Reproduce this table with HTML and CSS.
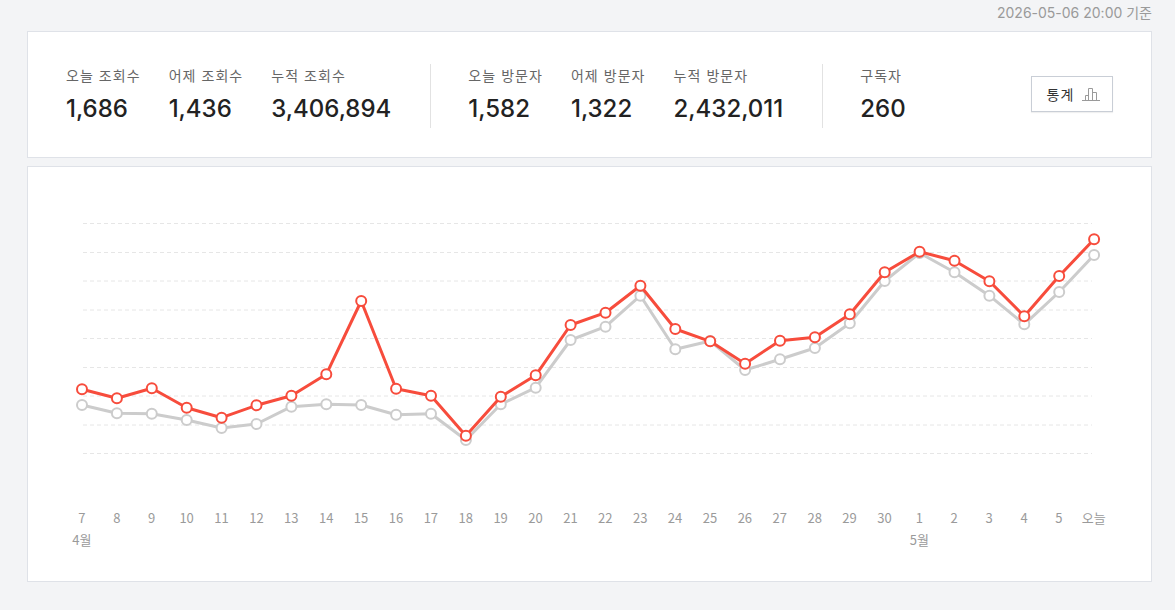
FILE: index.html
```html
<!DOCTYPE html>
<html lang="ko">
<head>
<meta charset="utf-8">
<title>통계</title>
<link rel="stylesheet" href="styles.css">
</head>
<body>
<div class="page">
  <div class="timestamp">2026-05-06 20:00 기준</div>

  <section class="card summary">
    <div class="group">
      <div class="stat"><div class="label">오늘 조회수</div><div class="value">1,686</div></div>
      <div class="stat"><div class="label">어제 조회수</div><div class="value">1,436</div></div>
      <div class="stat"><div class="label">누적 조회수</div><div class="value">3,406,894</div></div>
    </div>
    <div class="divider"></div>
    <div class="group">
      <div class="stat"><div class="label">오늘 방문자</div><div class="value">1,582</div></div>
      <div class="stat"><div class="label">어제 방문자</div><div class="value">1,322</div></div>
      <div class="stat"><div class="label">누적 방문자</div><div class="value">2,432,011</div></div>
    </div>
    <div class="divider"></div>
    <div class="group">
      <div class="stat"><div class="label">구독자</div><div class="value">260</div></div>
    </div>
    <button class="stats-btn" type="button"><span>통계</span>
      <svg class="stats-icon" width="18" height="14" viewBox="0 0 18 14" fill="none" stroke="#9a9a9a" stroke-width="1">
        <path d="M0 13.5H18"/>
        <path d="M3.5 13.5V8.5H6.5V13.5"/>
        <path d="M6.5 13.5V1.5H10.5V13.5"/>
        <path d="M10.5 13.5V5.5H14.5V13.5"/>
      </svg>
    </button>
  </section>

  <section class="card chart">
    <svg class="plot" width="1123" height="330" viewBox="0 0 1123 330">
      <g stroke="#e6e6e6" stroke-width="1" stroke-dasharray="4 3">
        <line x1="55" y1="56.5" x2="1064" y2="56.5"/>
        <line x1="55" y1="85.5" x2="1064" y2="85.5"/>
        <line x1="55" y1="114" x2="1064" y2="114"/>
        <line x1="55" y1="143" x2="1064" y2="143"/>
        <line x1="55" y1="171.5" x2="1064" y2="171.5"/>
        <line x1="55" y1="200.5" x2="1064" y2="200.5"/>
        <line x1="55" y1="229" x2="1064" y2="229"/>
        <line x1="55" y1="258" x2="1064" y2="258"/>
        <line x1="55" y1="286.5" x2="1064" y2="286.5"/>
      </g>
      <polyline fill="none" stroke="#cccccc" stroke-width="3" stroke-linejoin="round"
        points="54,238 88.9,246.3 123.8,246.7 158.7,253 193.6,261 228.5,257 263.4,239.7 298.3,237.3 333.2,238 368.1,247.7 403,246.7 437.9,273 472.8,237.3 507.7,220.7 542.6,173 577.5,159.7 612.4,128.7 647.3,182.3 682.2,174 717.1,203 752,192.3 786.9,181 821.8,156.3 856.7,114 891.6,86 926.5,105.3 961.4,128.7 996.3,157.3 1031.2,125 1066.1,88"/>
      <g fill="#fff" stroke="#cccccc" stroke-width="2">
        <circle cx="54" cy="238" r="5"/><circle cx="88.9" cy="246.3" r="5"/><circle cx="123.8" cy="246.7" r="5"/><circle cx="158.7" cy="253" r="5"/><circle cx="193.6" cy="261" r="5"/><circle cx="228.5" cy="257" r="5"/><circle cx="263.4" cy="239.7" r="5"/><circle cx="298.3" cy="237.3" r="5"/><circle cx="333.2" cy="238" r="5"/><circle cx="368.1" cy="247.7" r="5"/><circle cx="403" cy="246.7" r="5"/><circle cx="437.9" cy="273" r="5"/><circle cx="472.8" cy="237.3" r="5"/><circle cx="507.7" cy="220.7" r="5"/><circle cx="542.6" cy="173" r="5"/><circle cx="577.5" cy="159.7" r="5"/><circle cx="612.4" cy="128.7" r="5"/><circle cx="647.3" cy="182.3" r="5"/><circle cx="682.2" cy="174" r="5"/><circle cx="717.1" cy="203" r="5"/><circle cx="752" cy="192.3" r="5"/><circle cx="786.9" cy="181" r="5"/><circle cx="821.8" cy="156.3" r="5"/><circle cx="856.7" cy="114" r="5"/><circle cx="891.6" cy="86" r="5"/><circle cx="926.5" cy="105.3" r="5"/><circle cx="961.4" cy="128.7" r="5"/><circle cx="996.3" cy="157.3" r="5"/><circle cx="1031.2" cy="125" r="5"/><circle cx="1066.1" cy="88" r="5"/>
      </g>
      <polyline fill="none" stroke="#f74c3c" stroke-width="3" stroke-linejoin="round"
        points="54,222.3 88.9,231.3 123.8,221.3 158.7,240.7 193.6,250.7 228.5,238.3 263.4,228.7 298.3,207.3 333.2,134 368.1,221.7 403,228.7 437.9,268.7 472.8,229.7 507.7,208.3 542.6,158 577.5,145.7 612.4,118.7 647.3,162 682.2,174.3 717.1,196.7 752,173.7 786.9,170.3 821.8,147.3 856.7,105.3 891.6,84.7 926.5,93.7 961.4,114.3 996.3,149.3 1031.2,109 1066.1,72.3"/>
      <g fill="#fff" stroke="#f74c3c" stroke-width="2">
        <circle cx="54" cy="222.3" r="5"/><circle cx="88.9" cy="231.3" r="5"/><circle cx="123.8" cy="221.3" r="5"/><circle cx="158.7" cy="240.7" r="5"/><circle cx="193.6" cy="250.7" r="5"/><circle cx="228.5" cy="238.3" r="5"/><circle cx="263.4" cy="228.7" r="5"/><circle cx="298.3" cy="207.3" r="5"/><circle cx="333.2" cy="134" r="5"/><circle cx="368.1" cy="221.7" r="5"/><circle cx="403" cy="228.7" r="5"/><circle cx="437.9" cy="268.7" r="5"/><circle cx="472.8" cy="229.7" r="5"/><circle cx="507.7" cy="208.3" r="5"/><circle cx="542.6" cy="158" r="5"/><circle cx="577.5" cy="145.7" r="5"/><circle cx="612.4" cy="118.7" r="5"/><circle cx="647.3" cy="162" r="5"/><circle cx="682.2" cy="174.3" r="5"/><circle cx="717.1" cy="196.7" r="5"/><circle cx="752" cy="173.7" r="5"/><circle cx="786.9" cy="170.3" r="5"/><circle cx="821.8" cy="147.3" r="5"/><circle cx="856.7" cy="105.3" r="5"/><circle cx="891.6" cy="84.7" r="5"/><circle cx="926.5" cy="93.7" r="5"/><circle cx="961.4" cy="114.3" r="5"/><circle cx="996.3" cy="149.3" r="5"/><circle cx="1031.2" cy="109" r="5"/><circle cx="1066.1" cy="72.3" r="5"/>
      </g>
    </svg>
    <div class="axis">
      <span>7</span><span>8</span><span>9</span><span>10</span><span>11</span><span>12</span><span>13</span><span>14</span><span>15</span><span>16</span>
      <span>17</span><span>18</span><span>19</span><span>20</span><span>21</span><span>22</span><span>23</span><span>24</span><span>25</span><span>26</span>
      <span>27</span><span>28</span><span>29</span><span>30</span><span>1</span><span>2</span><span>3</span><span>4</span><span>5</span><span>오늘</span>
      <span class="month m-apr">4월</span>
      <span class="month m-may">5월</span>
    </div>
  </section>
</div>
</body>
</html>
```

FILE: styles.css
```css
* { box-sizing: border-box; }
html, body { margin: 0; padding: 0; }
body {
  background: #f3f4f6;
  font-family: "Noto Sans CJK KR", "Noto Sans", sans-serif;
  color: #222;
}
.page {
  width: 1175px;
  padding: 0 23px 0 27px;
}
.timestamp {
  height: 31px;
  padding-top: 4px;
  text-align: right;
  font-family: "Inter", "Noto Sans CJK KR", sans-serif;
  font-size: 14px;
  line-height: 18px;
  color: #9a9a9a;
}
.card {
  background: #fff;
  border: 1px solid #dfe2e8;
}
.summary {
  display: flex;
  align-items: flex-start;
  height: 127px;
  padding: 32px 38px 0 38px;
}
.group {
  display: flex;
  gap: 28px;
  height: 64px;
  padding-top: 1px;
}
.divider {
  width: 1px;
  height: 64px;
  background: #e2e2e2;
  margin: 0 37px 0 39px;
}
.stat {
  display: flex;
  flex-direction: column;
}
.label {
  font-size: 14px;
  line-height: 20px;
  letter-spacing: 1.05px;
  color: #666;
  white-space: nowrap;
}
.value {
  margin-top: 9px;
  font-family: "Inter", "Noto Sans", sans-serif;
  font-size: 24px;
  line-height: 30px;
  font-weight: 500;
  color: #222;
  white-space: nowrap;
}
.stats-btn {
  margin-left: auto;
  margin-top: 12px;
  width: 82px;
  height: 36px;
  display: flex;
  align-items: center;
  justify-content: center;
  gap: 8px;
  background: #fff;
  border: 1px solid #c9ced6;
  box-shadow: 0 1px 1px rgba(0, 0, 0, 0.06);
  font-family: "Noto Sans CJK KR", sans-serif;
  font-size: 14px;
  font-weight: 400;
  letter-spacing: 1px;
  color: #333;
  padding: 0 0 0 3px;
}
.stats-icon { display: block; margin-top: -1px; }
.chart {
  margin-top: 8px;
  height: 416px;
}
.plot { display: block; }
.axis {
  display: grid;
  grid-template-columns: repeat(30, 34.9px);
  row-gap: 2px;
  margin-top: 11px;
  padding-left: 36.5px;
  font-size: 13px;
  line-height: 20px;
  color: #9a9a9a;
  text-align: center;
}
.axis span { white-space: nowrap; }
.month { grid-row: 2; }
.m-apr { grid-column: 1; }
.m-may { grid-column: 25; }
```
